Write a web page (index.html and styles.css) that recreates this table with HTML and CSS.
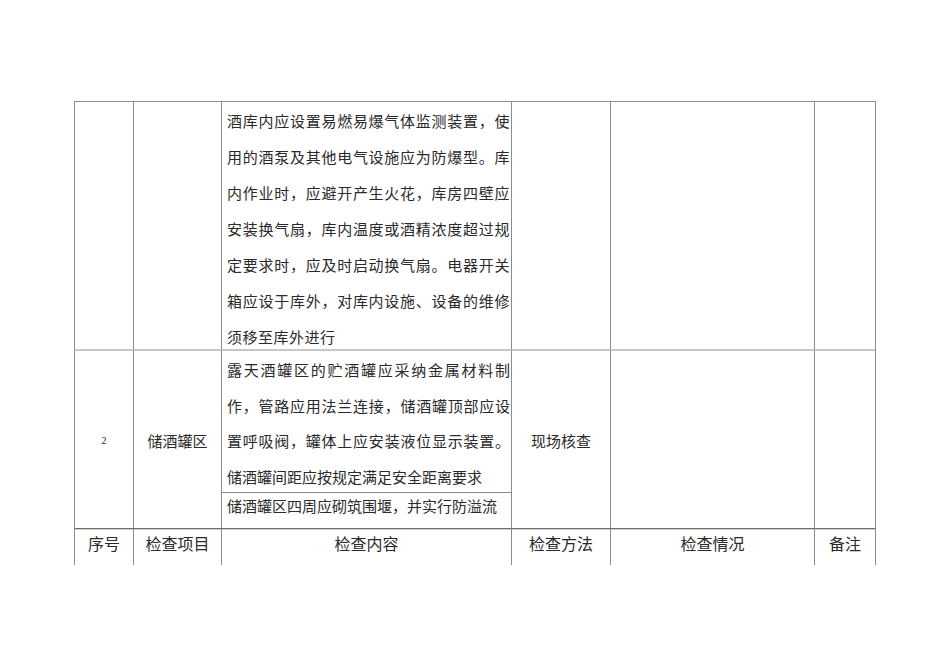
FILE: index.html
```html
<!DOCTYPE html>
<html lang="zh-CN">
<head>
<meta charset="utf-8">
<title>检查表</title>
<link rel="stylesheet" href="styles.css">
</head>
<body>
<div class="sheet">
  <div class="cell r1"></div>
  <div class="cell r1"></div>
  <div class="cell r1 content c1">酒库内应设置易燃易爆气体监测装置，使用的酒泵及其他电气设施应为防爆型。库内作业时，应避开产生火花，库房四壁应安装换气扇，库内温度或酒精浓度超过规定要求时，应及时启动换气扇。电器开关箱应设于库外，对库内设施、设备的维修须移至库外进行</div>
  <div class="cell r1"></div>
  <div class="cell r1"></div>
  <div class="cell r1"></div>

  <div class="cell r2 span mid num">2</div>
  <div class="cell r2 span mid">储酒罐区</div>
  <div class="cell r2 content c2">露天酒罐区的贮酒罐应采纳金属材料制作，管路应用法兰连接，储酒罐顶部应设置呼吸阀，罐体上应安装液位显示装置。储酒罐间距应按规定满足安全距离要求</div>
  <div class="cell r2 span mid">现场核查</div>
  <div class="cell r2 span"></div>
  <div class="cell r2 span"></div>
  <div class="cell r3 content c3">储酒罐区四周应砌筑围堰，并实行防溢流</div>

  <div class="cell head">序号</div>
  <div class="cell head">检查项目</div>
  <div class="cell head">检查内容</div>
  <div class="cell head">检查方法</div>
  <div class="cell head">检查情况</div>
  <div class="cell head">备注</div>
</div>
</body>
</html>
```

FILE: styles.css
```css
html, body {
  margin: 0;
  padding: 0;
  background: #ffffff;
}

body {
  font-family: "Noto Sans CJK SC", "Noto Sans", sans-serif;
  color: #2a2a2a;
}

.sheet {
  margin: 101px 0 0 74px;
  width: 802px;
  box-sizing: border-box;
  display: grid;
  grid-template-columns: 59px 88px 290px 99px 204px 61px;
  grid-template-rows: 247px 143px 36px 37px;
  border-top: 1px solid #8c8c8c;
  border-right: 1px solid #8c8c8c;
}

.cell {
  box-sizing: border-box;
  border-left: 1px solid #8c8c8c;
  font-size: 15px;
  overflow: hidden;
}

.r2 {
  border-top: 2px solid #c8c8c8;
}

.span {
  grid-row: span 2;
}

.r3 {
  grid-column: 3;
  border-top: 1px solid #8c8c8c;
}

.content {
  padding: 0 1px 0 5px;
  text-align: justify;
}

.c1 {
  padding-top: 1px;
  line-height: 36px;
  letter-spacing: 0.5px;
}

.c2 {
  padding-top: 1px;
  line-height: 35.5px;
}

.c3 {
  line-height: 26px;
}

.mid {
  display: flex;
  align-items: center;
  justify-content: center;
  padding-top: 2px;
}

.num {
  font-family: "Liberation Serif", serif;
  font-size: 10px;
}

.head {
  border-top: 1px solid #6e6e6e;
  box-shadow: inset 0 1px 0 #d0d0d0;
  font-size: 16px;
  line-height: 28px;
  padding-top: 0;
  text-align: center;
}
```
